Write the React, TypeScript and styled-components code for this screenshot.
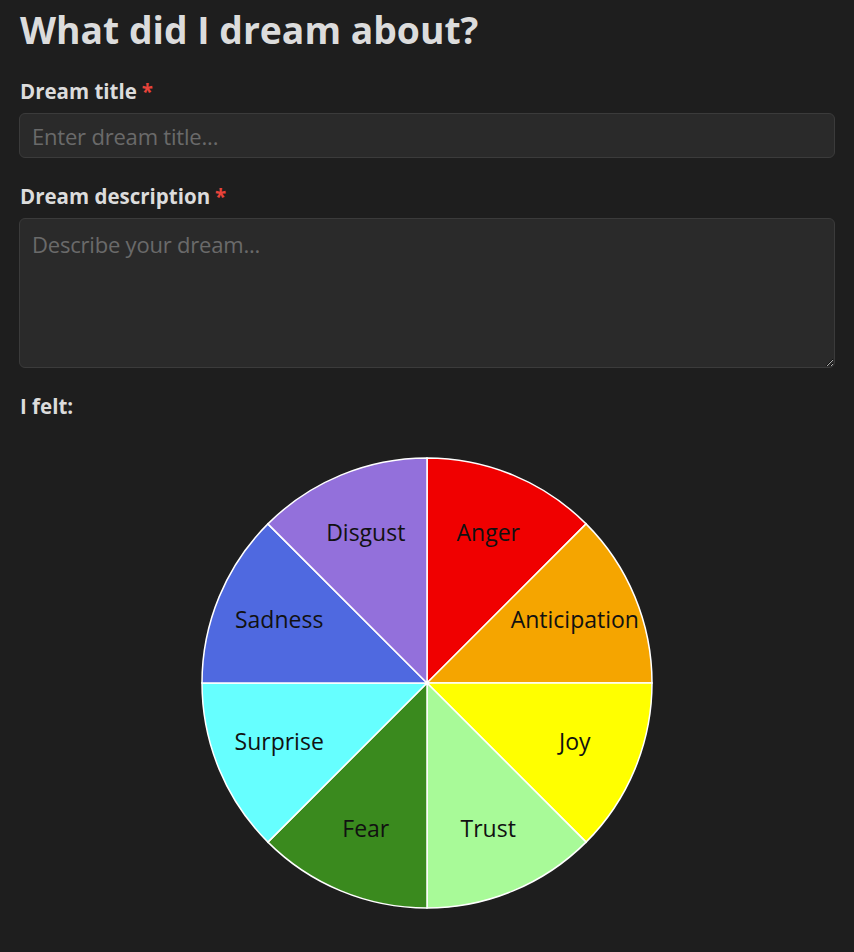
import React from "react";
import styled, { createGlobalStyle } from "styled-components";

const Global = createGlobalStyle`
  html, body { margin: 0; padding: 0; background: #1e1e1e; }
  body { font-family: "Open Sans", "Noto Sans", sans-serif; color: #dcdcdc; }
  * { box-sizing: border-box; }
`;

const Page = styled.main`
  padding: 8px 19px 40px;
  display: flex;
  flex-direction: column;
`;

const Title = styled.h1`
  margin: 0 0 0 1px;
  font-size: 37.3px;
  line-height: 44px;
  font-weight: 700;
  letter-spacing: 0;
  color: #dcdcdc;
`;

const Field = styled.div<{ $top: number }>`
  display: flex;
  flex-direction: column;
  gap: 9px;
  margin-top: ${(p) => p.$top}px;
`;

const Label = styled.label`
  font-size: 20.5px;
  line-height: 26px;
  font-weight: 700;
  letter-spacing: 0;
  color: #dcdcdc;
  margin-left: 1px;
`;

const Req = styled.span`
  color: #e8433a;
  margin-left: 5px;
`;

const inputBase = `
  width: 100%;
  background: #2a2a2a;
  border: 1px solid #3b3b3b;
  border-radius: 6px;
  color: #dcdcdc;
  font-family: "Open Sans", "Noto Sans", sans-serif;
  font-size: 22px;
  letter-spacing: -0.2px;
  padding: 0 12px;
  outline: none;
  &::placeholder { color: #6a6a6a; }
`;

const TextInput = styled.input`
  ${inputBase}
  height: 45px;
`;

const TextArea = styled.textarea`
  ${inputBase}
  height: 150px;
  line-height: 30px;
  padding-top: 10px;
  resize: vertical;
  display: block;
`;

const WheelWrap = styled.div`
  display: flex;
  justify-content: center;
  margin-top: 38px;
`;

const emotions = [
  { name: "Anger", color: "#f00000" },
  { name: "Anticipation", color: "#f5a500" },
  { name: "Joy", color: "#ffff00" },
  { name: "Trust", color: "#a8fa98" },
  { name: "Fear", color: "#3a8a1e" },
  { name: "Surprise", color: "#66ffff" },
  { name: "Sadness", color: "#4f69e0" },
  { name: "Disgust", color: "#9370db" },
];

const R = 225;
const C = 226;

function pt(deg: number, r: number) {
  const a = (deg * Math.PI) / 180;
  return [C + r * Math.sin(a), C - r * Math.cos(a)];
}

const SliceText = styled.text`
  font-family: "Open Sans", "Noto Sans", sans-serif;
  font-size: 23px;
  fill: #111;
`;

function Wheel() {
  return (
    <svg width={452} height={452} viewBox="0 0 452 452">
      {emotions.map((e, i) => {
        const a0 = i * 45;
        const a1 = a0 + 45;
        const [x0, y0] = pt(a0, R);
        const [x1, y1] = pt(a1, R);
        const [lx, ly] = pt(a0 + 22.5, 160);
        return (
          <g key={e.name}>
            <path
              d={`M${C},${C} L${x0},${y0} A${R},${R} 0 0 1 ${x1},${y1} Z`}
              fill={e.color}
              stroke="#ffffff"
              strokeWidth={1.5}
            />
            <SliceText x={lx} y={ly - 3} textAnchor="middle" dominantBaseline="central">
              {e.name}
            </SliceText>
          </g>
        );
      })}
    </svg>
  );
}

export default function App() {
  return (
    <>
      <Global />
      <Page>
        <Title>What did I dream about?</Title>
        <Field $top={26}>
          <Label>
            Dream title<Req>*</Req>
          </Label>
          <TextInput placeholder="Enter dream title..." />
        </Field>
        <Field $top={25}>
          <Label>
            Dream description<Req>*</Req>
          </Label>
          <TextArea placeholder="Describe your dream..." />
        </Field>
        <Field $top={25}>
          <Label>I felt:</Label>
        </Field>
        <WheelWrap>
          <Wheel />
        </WheelWrap>
      </Page>
    </>
  );
}
